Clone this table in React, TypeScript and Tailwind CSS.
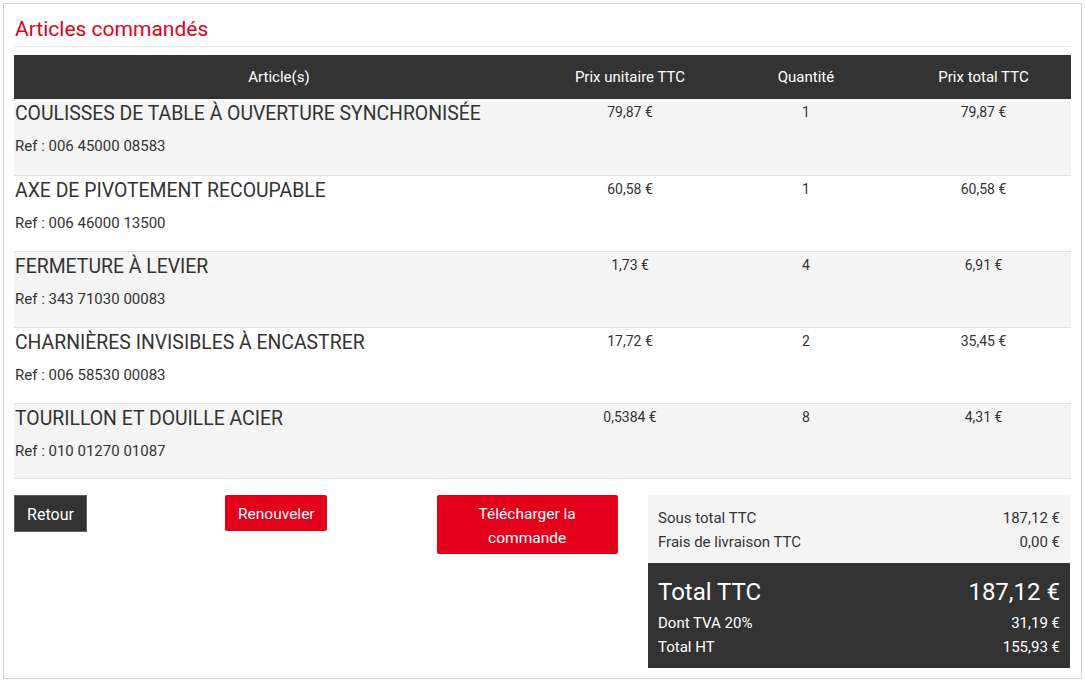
import React from "react";

const rows = [
  { name: "COULISSES DE TABLE À OUVERTURE SYNCHRONISÉE", ref: "006 45000 08583", pu: "79,87 €", q: "1", pt: "79,87 €" },
  { name: "AXE DE PIVOTEMENT RECOUPABLE", ref: "006 46000 13500", pu: "60,58 €", q: "1", pt: "60,58 €" },
  { name: "FERMETURE À LEVIER", ref: "343 71030 00083", pu: "1,73 €", q: "4", pt: "6,91 €" },
  { name: "CHARNIÈRES INVISIBLES À ENCASTRER", ref: "006 58530 00083", pu: "17,72 €", q: "2", pt: "35,45 €" },
  { name: "TOURILLON ET DOUILLE ACIER", ref: "010 01270 01087", pu: "0,5384 €", q: "8", pt: "4,31 €" },
];

export default function App() {
  return (
    <div
      className="ml-[3px] mt-[3px] w-[1079px] h-[676px] border border-[#d0d0d0] px-[10px] pt-[13px] text-[#333]"
      style={{ fontFamily: "Roboto, 'Liberation Sans', sans-serif" }}
    >
      <h2 className="text-[21px] leading-[24px] text-[#e2001a] pb-[5px] pl-[1px] border-b border-[#eaeaea]">
        Articles commandés
      </h2>
      <div className="mt-[8px]">
        <div className="grid grid-cols-[530px_172px_180px_1fr] h-[44px] items-center bg-[#333] text-white text-[15px] text-center">
          <div>Article(s)</div>
          <div>Prix unitaire TTC</div>
          <div>Quantité</div>
          <div>Prix total TTC</div>
        </div>
        {rows.map((r, i) => (
          <div
            key={i}
            className={
              "grid grid-cols-[530px_172px_180px_1fr] h-[76px] " +
              (i % 2 === 0 ? "bg-[#f4f4f4] " : "bg-white ") +
              (i > 0 ? "border-t border-[#dedede] " : "") +
              (i === rows.length - 1 ? "border-b border-[#dedede]" : "")
            }
          >
            <div className="pt-[3px] pl-[1px]">
              <div className="text-[19.4px] leading-[24px]">{r.name}</div>
              <div className="text-[15px] leading-[20px] mt-[10px]">Ref : {r.ref}</div>
            </div>
            <div className="text-center text-[14px] leading-[20px] pt-[3px]">{r.pu}</div>
            <div className="text-center text-[14px] leading-[20px] pt-[3px]">{r.q}</div>
            <div className="text-center text-[14px] leading-[20px] pt-[3px]">{r.pt}</div>
          </div>
        ))}
      </div>
      <div className="mt-[16px] flex">
        <div className="w-[634px] grid grid-cols-3 items-start">
          <div>
            <button className="h-[37px] w-[73px] pt-[2px] bg-[#333] border border-[#5a5e63] text-white text-[16px]">
              Retour
            </button>
          </div>
          <div>
            <button className="h-[36px] w-[102px] pt-[3px] bg-[#e2001a] rounded-[2px] text-white text-[15.5px]">
              Renouveler
            </button>
          </div>
          <div>
            <button className="h-[59px] w-[181px] pt-[2px] bg-[#e2001a] rounded-[2px] text-white text-[15.5px] leading-[24px] px-[20px]">
              Télécharger la commande
            </button>
          </div>
        </div>
        <div className="w-[422px]">
          <div className="bg-[#f4f4f4] px-[10px] pt-[11px] pb-[9px] text-[15px] leading-[24px]">
            <div className="flex justify-between">
              <span>Sous total TTC</span>
              <span>187,12 €</span>
            </div>
            <div className="flex justify-between">
              <span>Frais de livraison TTC</span>
              <span>0,00 €</span>
            </div>
          </div>
          <div className="bg-[#333] text-white px-[10px] pt-[13px] pb-[9px] text-[15px] leading-[24px]">
            <div className="flex justify-between text-[24px] leading-[32px] mb-[3px]">
              <span>Total TTC</span>
              <span>187,12 €</span>
            </div>
            <div className="flex justify-between">
              <span>Dont TVA 20%</span>
              <span>31,19 €</span>
            </div>
            <div className="flex justify-between">
              <span>Total HT</span>
              <span>155,93 €</span>
            </div>
          </div>
        </div>
      </div>
    </div>
  );
}
